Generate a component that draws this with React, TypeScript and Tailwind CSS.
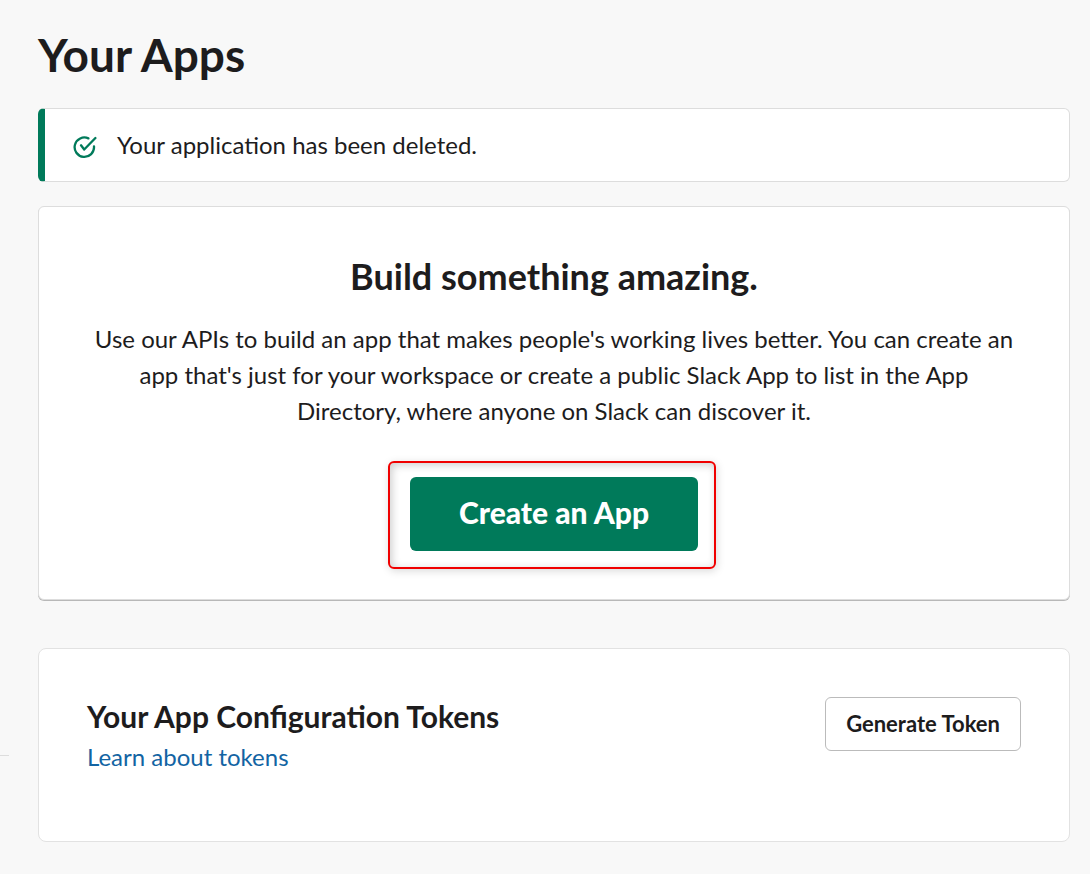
export default function App() {
  return (
    <main className="relative min-h-screen bg-[#f8f8f8] pt-[26px] pr-5 pb-8 pl-[38px] font-['Lato',sans-serif] text-[24px] leading-9 text-[#1d1c1d]">
      <div className="absolute top-[755px] left-0 h-px w-[9px] bg-[#dddddd]" />
      <h1 className="text-[46px] leading-[58px] font-bold">Your Apps</h1>
      <div role="status" className="mt-6 flex items-center rounded-md border border-l-[7px] border-[#dddddd] border-l-[#007a5a] bg-white py-[18px] pl-7">
        <svg className="mt-1 h-6 w-6 shrink-0" viewBox="0 0 24 24" fill="none" stroke="#007a5a" strokeWidth="2.3" strokeLinecap="round" strokeLinejoin="round" aria-hidden="true">
          <path d="M15.4 3.4A9.7 9.7 0 1 0 21 11.4" />
          <path d="m8 10.3 3.2 4.2L22.4 3" />
        </svg>
        <p className="ml-5">Your application has been deleted.</p>
      </div>
      <section className="mt-6 flex flex-col items-center rounded-md border border-[#dddddd] bg-white px-12 py-12 text-center shadow-[0_1px_0_#b8b8b8]">
        <h2 className="text-[36px] leading-[42px] font-bold">Build something amazing.</h2>
        <p className="mt-6">
          Use our APIs to build an app that makes people's working lives better. You can create an app that's just for your workspace or create a public Slack App to list in the App Directory, where anyone on Slack can discover it.
        </p>
        <div className="relative mt-12">
          <button type="button" className="block h-[74px] w-72 rounded-md bg-[#007a5a] pb-1 text-[30px] font-black text-white">Create an App</button>
          <div className="pointer-events-none absolute -top-4 -right-[18px] -bottom-[18px] -left-[22px] rounded-md border-2 border-[#f00000] shadow-[1px_2px_8px_rgba(0,0,0,0.15),inset_2px_2px_8px_rgba(0,0,0,0.2)]" />
        </div>
      </section>
      <section className="mt-12 flex items-start justify-between rounded-lg border border-[#e2e2e2] bg-white px-12 pt-12 pb-[66px]">
        <div>
          <h2 className="text-[30px] leading-[38px] font-bold">Your App Configuration Tokens</h2>
          <a href="#tokens" className="mt-1 block text-[#1264a3]">Learn about tokens</a>
        </div>
        <button type="button" className="h-[54px] rounded-md border border-[#bbbbbb] px-5 text-[22px] font-bold">Generate Token</button>
      </section>
    </main>
  );
}
